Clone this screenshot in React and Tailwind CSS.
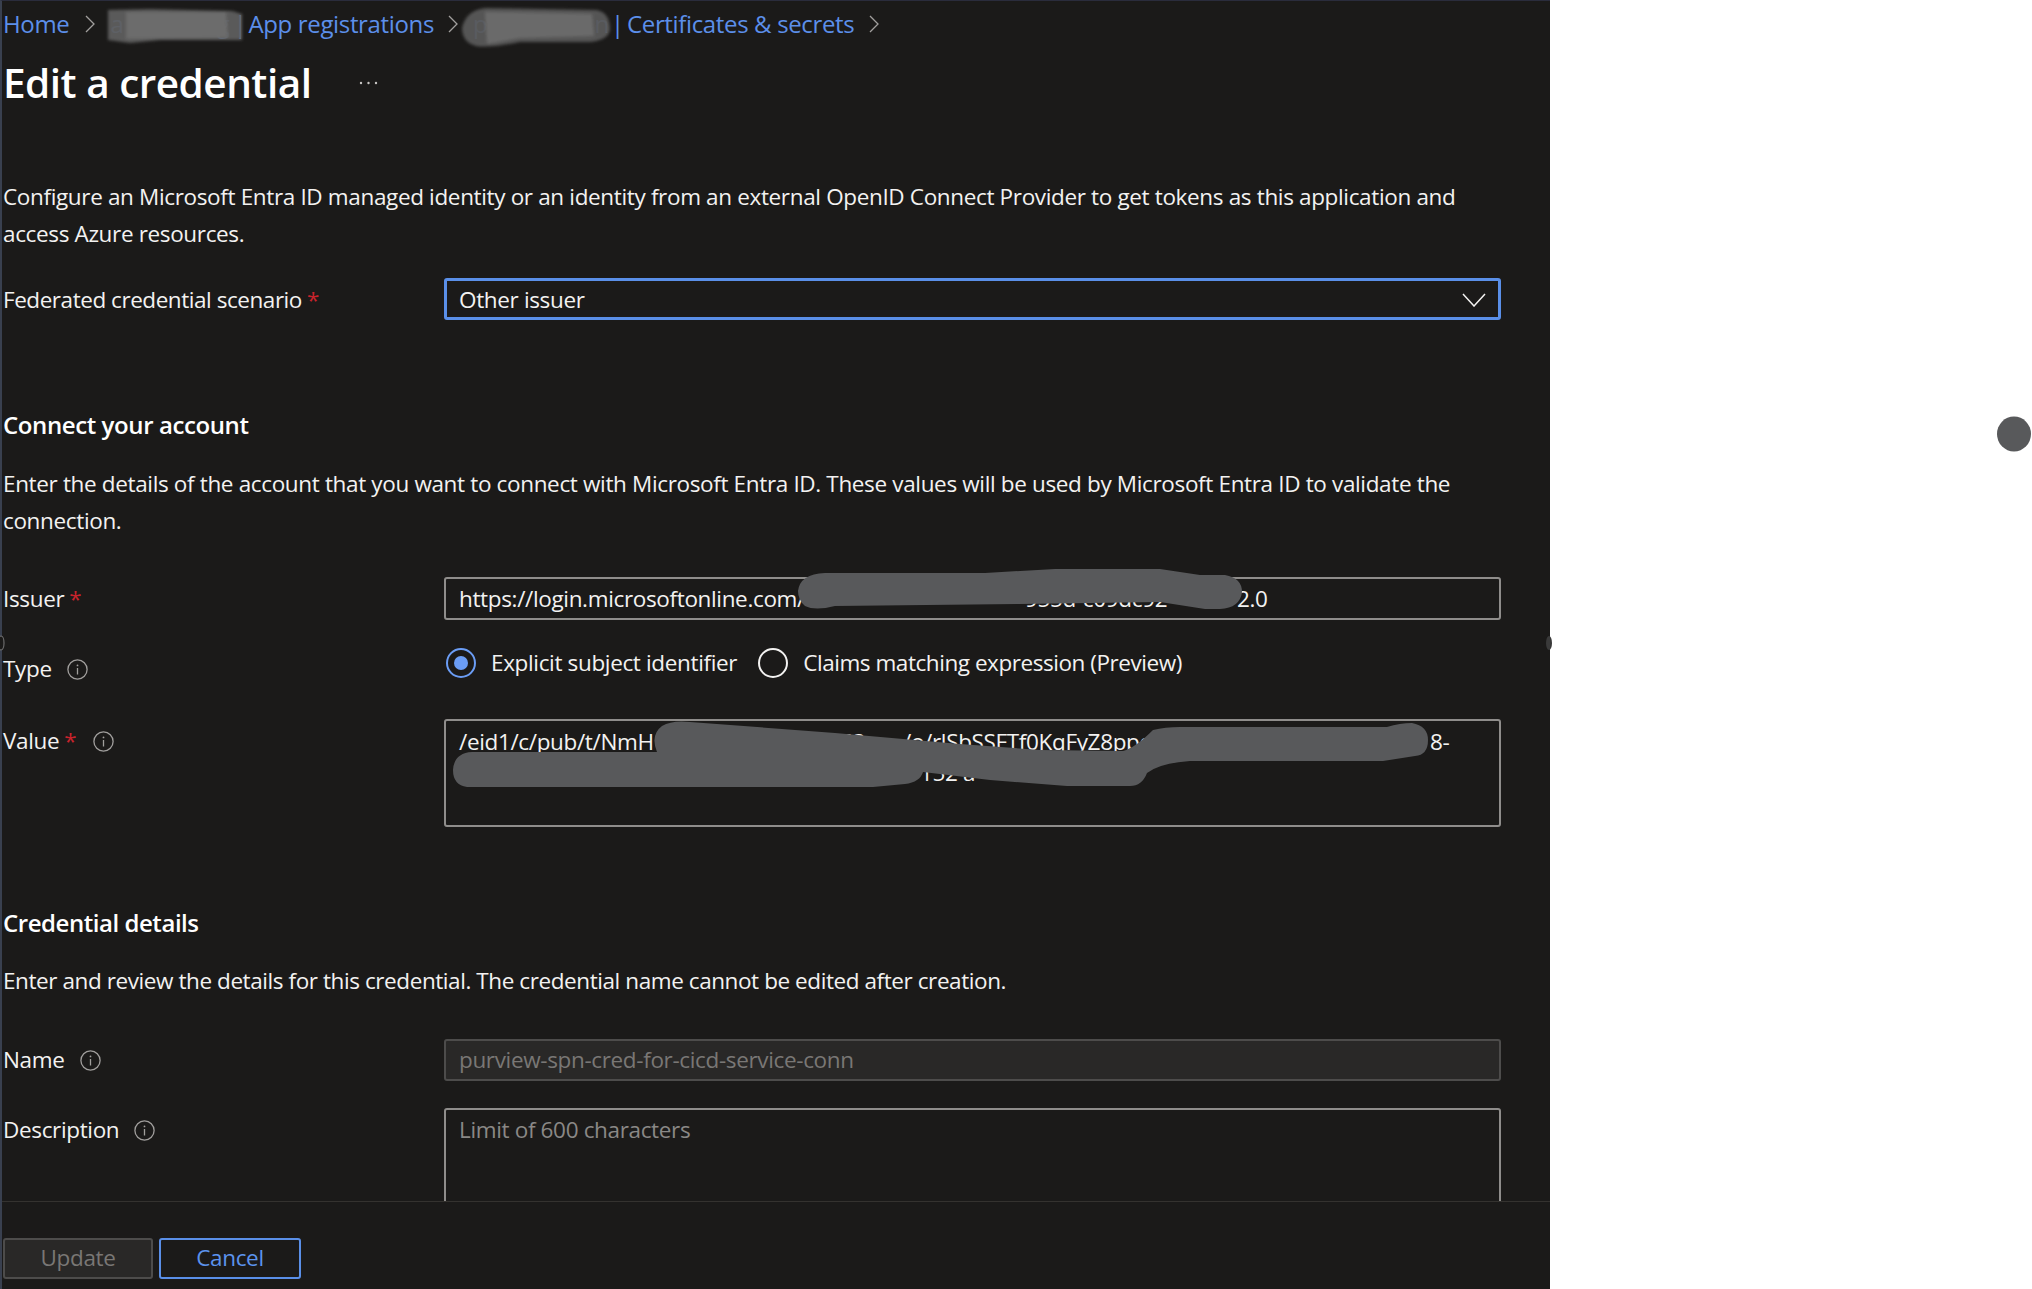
import React from 'react';

const Chevron = ({ className = "" }) => (
  <svg width="10" height="18" viewBox="0 0 10 18" fill="none" className={className}>
    <path d="M1 1l8 8-8 8" stroke="#a19f9d" strokeWidth="1.3" />
  </svg>
);

const Info = ({ className = "" }) => (
  <svg width="21" height="21" viewBox="0 0 21 21" fill="none" className={className}>
    <circle cx="10.5" cy="10.5" r="9.6" stroke="#a19f9d" strokeWidth="1.3" />
    <path d="M10.5 9v6.5" stroke="#a19f9d" strokeWidth="1.3" />
    <circle cx="10.5" cy="6.4" r="0.9" fill="#a19f9d" />
  </svg>
);

const Star = () => <span className="text-[#c8232c] ml-[5px]">*</span>;

const Label = ({ children, className = "" }) => (
  <div className={`flex items-center text-[#f3f2f1] ${className}`}>{children}</div>
);

const Redactions = () => (
  <svg width="2032" height="1289" viewBox="0 0 2032 1289" className="absolute inset-0 pointer-events-none">
    <defs>
      <filter id="soft" x="-10%" y="-30%" width="120%" height="160%">
        <feGaussianBlur stdDeviation="1.6" />
      </filter>
    </defs>
    {/* breadcrumb smudges */}
    <g filter="url(#soft)" fillOpacity="0.92">
      <path d="M108 10 L150 9 L232 11 L242 14 L242 40 L160 40 L130 43 L108 40 Z" fill="#5f5f5f" />
      <path d="M126 12 L226 12 L228 38 L126 39 Z" fill="#6c6c6c" />
      <path d="M462 28 Q466 10 486 8 L596 10 Q610 12 610 30 Q608 40 590 42 L520 42 Q490 48 476 46 Q462 42 462 28 Z" fill="#5a5a5a" />
      <path d="M485 12 L592 14 L594 36 L520 38 L487 44 Z" fill="#6c6c6c" />
    </g>
    {/* issuer */}
    <path d="M798 591 Q800 574 825 573 L985 573 L1055 569 L1160 569 L1200 575 L1225 575 Q1242 578 1242 592 Q1240 608 1220 609 L1205 609 L1160 602 L1020 604 L835 606 Q815 611 805 606 Q798 600 798 591 Z" fill="#58595b" />
    {/* value */}
    <path d="M453 770 Q454 753 472 752 L657 752 Q650 735 662 726 Q672 720 690 722 L835 733 L960 744 L1040 750 L1123 751 Q1135 748 1153 730 Q1165 727 1180 727 L1387 727 Q1400 723 1412 723 Q1428 726 1428 740 Q1428 755 1415 756 L1383 761 L1190 761 Q1160 763 1147 773 Q1142 786 1130 786 L1067 786 L990 780 L923 772 Q920 782 905 784 L873 787 L467 787 Q453 785 453 770 Z" fill="#58595b" />
    {/* panel edge handles */}
    <ellipse cx="1" cy="643" rx="3" ry="7" fill="#1b1a19" stroke="#6d6d6d" strokeWidth="1.2" />
    <ellipse cx="1549" cy="643" rx="3" ry="7" fill="#3a3a3a" />
    {/* stray dot on the white side */}
    <ellipse cx="2014" cy="434" rx="17" ry="17.5" fill="#58595b" />
  </svg>
);

const App = () => {
  return (
    <div className="relative w-[2032px] h-[1289px] bg-white overflow-hidden font-['Open_Sans',sans-serif] text-[22.5px] tracking-[-0.35px]">
      <div className="flex flex-col w-[1550px] h-[1289px] bg-[#1b1a19] border-l-2 border-t border-l-[#39404f] border-t-[#2a2c3c]">
        <div className="flex-1 overflow-hidden pl-[1px]">
          {/* Breadcrumb */}
          <div className="flex items-center h-[45px] text-[#5c8fea] text-[24px] tracking-[-0.35px]">
            <span>Home</span>
            <Chevron className="ml-[16px]" />
            <span className="w-[125px] ml-[13px] flex justify-between text-[#4a6ca6] pl-[2px] pr-[4px]">
              <span>a</span>
              <span>g</span>
            </span>
            <span className="w-[15px]">|</span>
            <span>App registrations</span>
            <Chevron className="ml-[14px]" />
            <span className="w-[150px] ml-[3px] flex justify-between text-[#4a6ca6] pl-[12px] pr-[2px]">
              <span>p</span>
              <span>n</span>
            </span>
            <span className="w-[16px]">|</span>
            <span>Certificates &amp; secrets</span>
            <Chevron className="ml-[15px]" />
          </div>

          {/* Title */}
          <div className="flex items-center h-[60px] mt-[7px]">
            <h1 className="text-[40.5px] font-semibold text-white tracking-[-0.5px]">Edit a credential</h1>
            <svg width="20" height="4" viewBox="0 0 20 4" className="ml-[48px]">
              <circle cx="2" cy="2" r="1.2" fill="#c8c6c4" />
              <circle cx="9.5" cy="2" r="1.2" fill="#c8c6c4" />
              <circle cx="17" cy="2" r="1.2" fill="#c8c6c4" />
            </svg>
          </div>

          <p className="mt-[66px] leading-[36.5px] text-[#f3f2f1] w-[1480px]">
            Configure an Microsoft Entra ID managed identity or an identity from an external OpenID Connect Provider to get tokens as this application and access Azure resources.
          </p>

          <div className="grid grid-cols-[441px_1057px] mt-[26px]">
            <Label className="h-[42px] pt-[1px] tracking-[-0.45px]">
              Federated credential scenario<Star />
            </Label>
            <div className="flex items-center justify-between h-[42px] px-[12px] pt-[1px] border-[3px] border-[#5a8fe8] rounded-[3px] text-[#f3f2f1]">
              <span>Other issuer</span>
              <svg width="24" height="14" viewBox="0 0 24 14" fill="none">
                <path d="M1 1l11 12L23 1" stroke="#f3f2f1" strokeWidth="1.5" />
              </svg>
            </div>
          </div>

          <h2 className="mt-[87px] h-[36px] leading-[36px] text-[24px] font-semibold text-white tracking-[-0.4px]">Connect your account</h2>
          <p className="mt-[23px] leading-[36.5px] text-[#f3f2f1] w-[1480px]">
            Enter the details of the account that you want to connect with Microsoft Entra ID. These values will be used by Microsoft Entra ID to validate the connection.
          </p>

          <div className="grid grid-cols-[441px_1057px] mt-[38px]">
            <Label className="h-[43px]">
              Issuer<Star />
            </Label>
            <div className="flex items-center h-[43px] px-[13px] border-2 border-[#8f8d8b] rounded-[3px] text-[#f3f2f1] whitespace-nowrap">
              <span className="w-[566px]">https://login.microsoftonline.com/</span>
              <span className="w-[212px]">955d-c09dc92</span>
              <span>2.0</span>
            </div>
          </div>

          <div className="grid grid-cols-[441px_1057px] mt-[28px]">
            <Label className="h-[30px] relative top-[6px] gap-[15px]">
              Type
              <Info />
            </Label>
            <div className="flex items-center h-[30px] pl-[2px] text-[#f3f2f1]">
              <span className="flex items-center justify-center w-[30px] h-[30px] rounded-full border-2 border-[#6b9df5]">
                <span className="w-[14px] h-[14px] rounded-full bg-[#6b9df5]" />
              </span>
              <span className="ml-[15px]">Explicit subject identifier</span>
              <span className="w-[30px] h-[30px] ml-[21px] rounded-full border-2 border-[#f3f2f1]" />
              <span className="ml-[15px] tracking-[-0.45px]">Claims matching expression (Preview)</span>
            </div>
          </div>

          <div className="grid grid-cols-[441px_1057px] mt-[41px]">
            <Label className="self-start h-[44px] gap-[17px]">
              <span>Value<Star /></span>
              <Info />
            </Label>
            <div className="h-[108px] px-[13px] pt-[5px] border-2 border-[#8f8d8b] rounded-[3px] text-[#f3f2f1] leading-[31px] whitespace-nowrap">
              <div className="flex">
                <span className="w-[381px]">/eid1/c/pub/t/NmH</span>
                <span className="w-[63px]">63</span>
                <span className="w-[527px]">/o/rlSbSSFTf0KqFyZ8ppdl</span>
                <span>8-</span>
              </div>
              <div className="flex">
                <span className="ml-[461px]">152 a</span>
              </div>
            </div>
          </div>

          <h2 className="mt-[78px] h-[36px] leading-[36px] text-[24px] font-semibold text-white tracking-[-0.45px]">Credential details</h2>
          <p className="mt-[22px] leading-[36px] text-[#f3f2f1] tracking-[-0.42px]">
            Enter and review the details for this credential. The credential name cannot be edited after creation.
          </p>

          <div className="grid grid-cols-[441px_1057px] mt-[40px]">
            <Label className="h-[42px] gap-[15px]">
              Name
              <Info />
            </Label>
            <div className="flex items-center h-[42px] px-[13px] bg-[#292827] border-2 border-[#4d4c4b] rounded-[3px] text-[#797775]">
              purview-spn-cred-for-cicd-service-conn
            </div>
          </div>

          <div className="grid grid-cols-[441px_1057px] mt-[27px]">
            <Label className="self-start gap-[15px] h-[44px]">
              Description
              <Info />
            </Label>
            <div className="h-[130px] px-[13px] pt-[2px] border-2 border-[#8f8d8b] rounded-[3px] text-[#8a8886] leading-[36px]">
              Limit of 600 characters
            </div>
          </div>
        </div>

        {/* Footer */}
        <div className="flex items-start gap-[6px] h-[88px] pt-[36px] pl-[1px] border-t border-[#34322f]">
          <button className="w-[150px] h-[41px] pb-[2px] bg-[#292827] border-2 border-[#4d4c4b] rounded-[3px] text-[#797775] font-medium">Update</button>
          <button className="w-[142px] h-[41px] pb-[2px] border-2 border-[#5a8fe8] rounded-[3px] text-[#5c93ed] font-medium">Cancel</button>
        </div>
      </div>
      <Redactions />
    </div>
  );
};

export default App;
